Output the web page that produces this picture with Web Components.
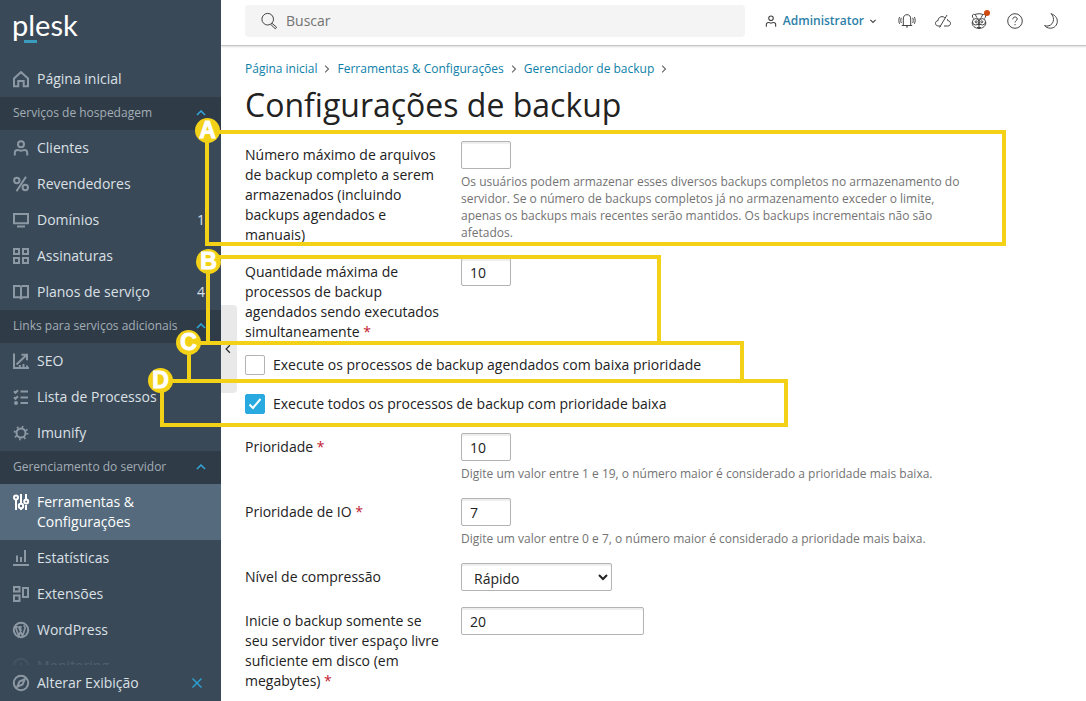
<!DOCTYPE html>
<html lang="pt-BR">
<head>
<meta charset="utf-8">
<meta name="viewport" content="width=device-width, initial-scale=1">
<title>Configurações de backup</title>
<style>
  body { margin: 0; font: 14px/20px "Open Sans", "Noto Sans", sans-serif; color: #222; background: #fff; }
</style>
</head>
<body>
<backup-page></backup-page>

<script>
const ICONS = {
  home: '<path d="M1 15.2V7.5L8 1l7 6.5v7.7h-4.300V10H5.300v5.200z"/>',
  user: '<circle cx="8" cy="4.300" r="3"/><path d="M1.800 15.500v-2.700c0-2 1-2.800 2.700-2.800 1.500 0 2 .8 3.500.8s2-.8 3.500-.8c1.700 0 2.700.8 2.700 2.800v2.700"/>',
  percent: '<circle cx="3.800" cy="4.500" r="2.700"/><circle cx="12.300" cy="11.500" r="2.700"/><path d="M13 .8L3.500 15.300"/>',
  monitor: '<path d="M1 2h14v9.300H1zM4 14.400h8"/>',
  grid: '<path d="M1 1h5v5H1zM10 1h5v5h-5zM1 10h5v5H1zM10 10h5v5h-5z"/>',
  book: '<path d="M8 2.500v12.500M1 2h5.500L8 3l1.500-1H15v11.300H9.500L8 14.500l-1.500-1.200H1z"/>',
  seo: '<path d="M1 .5V15h15M3.500 11.500L13 2.500M8.500 1.700H14v5.500M6.800 15v-3M10.500 15v-4M14 15v-2.500"/>',
  list: '<path d="M1 2.300l1.500 1.500L5 1.200M1 8.300l1.500 1.500L5 7.200M7.500 2.500H15M7.500 8.500H15M7.500 14H15"/><circle cx="3" cy="14" r="1"/>',
  gear: '<circle cx="8" cy="8" r="4.500"/><circle cx="8" cy="8" r="6.300" stroke-width="2.200" stroke-dasharray="1.600 3.350"/>',
  sliders: '<g stroke-width="2"><path d="M3 6v10M8 0v9.500M8 14.500V16M13 0v6.500M13 11v5"/><circle cx="3" cy="3.500" r="2"/><circle cx="8" cy="12" r="2.200"/><circle cx="13.200" cy="7.500" r="2"/></g>',
  chart: '<path d="M0 15h16M4 12V5.500M8 12V7M12 12V0"/>',
  blocks: '<path d="M1 1h5.500v4.500H1zM1 9.500h5.500V15H1zM10 2h5v9h-5z"/>',
  wordpress: '<circle cx="8" cy="8" r="7.200"/><path d="M2.500 5l3.300 9L8 8 6.800 5M5.700 5l3.800 9 2.500-7.500c.4-1.500-1-2-1-3.200M1.800 4.800H5M5.500 4.800h3.200" stroke-width="1.700"/>',
  gauge: '<circle cx="8" cy="8" r="7.200"/><path d="M5 11V8M8 11V5M11 11V7"/>',
  compass: '<circle cx="8" cy="8" r="7.200"/><path d="M11.800 4.200L9.500 9.500 4.200 11.800 6.500 6.500z"/>',
  close: '<path d="M3.500 3.500l9 9M12.500 3.500l-9 9"/>',
  up: '<path d="M4 10l4-4 4 4"/>',
  down: '<path d="M4.500 6.500l3.500 3.500 3.500-3.500"/>',
  right: '<path d="M5.500 3.500L10 8l-4.500 4.500"/>',
  left: '<path d="M10.500 3L5.500 8l5 5"/>',
  search: '<circle cx="6.700" cy="6.200" r="5.800"/><path d="M10.800 10.200l4.800 4-1.300 1.600-4.700-4.500"/>',
  bell: '<path d="M2.800 12.500h10.400M4.300 12.300V6c0-2.800 1.300-4.300 3.700-4.300s3.700 1.500 3.700 4.300v6.300M7 13.900h2M2.300 4.800c-.7 1.500-.7 3.700 0 5.200M13.700 4.800c.7 1.500.7 3.700 0 5.200M.6 4c-1 2-1 4.800 0 6.800M15.400 4c1 2 1 4.800 0 6.800"/>',
  cloud: '<path d="M6 13H3.500C1.500 13 .5 11.800.5 10.300s1-2.500 2.500-2.600C3.200 5 5 3.600 7 3.600c1.200 0 2 .4 2.800 1.200M9 13h3.700c1.800 0 2.800-1.200 2.800-2.700 0-1.500-1-2.500-2.700-2.600-.1-.7-.3-1.200-.6-1.700M12 2L4.500 14.500"/>',
  panda: '<path d="M4 1.500c2.500-1 5.500-1 8 0M2.500 5.500C1 4 1 1.800 2.300 1.300 3.500 1 5 2.300 5.500 4M13.500 5.500C15 4 15 1.800 13.700 1.300 12.500 1 11 2.300 10.500 4M5.500 4.500L8 6.500l2.500-2M1.500 8.500c-.8 2 0 4 1.500 5.200 3 2.400 7 2.400 10 0 1.500-1.200 2.300-3.200 1.500-5.200M7 11.500h2l-1 1zM8 12.500v2M6 14.500h4"/><circle cx="4.700" cy="8.800" r="3.200"/><circle cx="11.300" cy="8.800" r="3.200"/><circle cx="5.200" cy="8.800" r="1"/><circle cx="10.800" cy="8.800" r="1"/>',
  help: '<circle cx="8" cy="8" r="7.300"/><path d="M5.800 6.300c0-1.500 1-2.300 2.200-2.300s2.200.8 2.200 2c0 1.700-2.200 1.700-2.200 3.500M8 11v1.300"/>',
  moon: '<path d="M8 .7c4 1.300 6.300 4 6.300 7.500 0 4-3 7-6.800 7-2.700 0-4.700-1-6-2.700 1 .5 2.300.7 3.500.5 3.500-.6 5.500-3.500 5.500-6.500 0-2.300-1-4.500-2.500-5.800z"/>'
};

/* Base class: clones a template's markup into an open shadow root. */
class Base extends HTMLElement {
  connectedCallback() {
    if (this.shadowRoot) return;
    const t = document.createElement('template');
    t.innerHTML = this.render();
    this.attachShadow({ mode: 'open' }).append(t.content.cloneNode(true));
  }
  attr(name, fallback = '') { return this.getAttribute(name) ?? fallback; }
}

customElements.define('ui-icon', class extends Base {
  render() {
    return `<style>
      :host { display: block; flex: none; width: 16px; height: 16px; }
      svg { display: block; width: 100%; height: 100%; overflow: visible; fill: none; stroke: currentColor; stroke-width: var(--stroke, 1); }
    </style><svg viewBox="0 0 16 16" aria-hidden="true">${ICONS[this.attr('name')]}</svg>`;
  }
});

customElements.define('nav-item', class extends Base {
  render() {
    const count = this.attr('count');
    return `<style>
      :host { display: block; flex: none; --stroke: 2; }
      a { display: flex; gap: 8px; padding: 8px 16px 8px 13px; color: #dbe0e5; text-decoration: none; }
      ui-icon { margin-top: 2px; color: #8c98a3; }
      .text { flex: 1; }
      :host([active]) { background: #556b7d; }
      :host([active]) a, :host([active]) ui-icon { color: #fff; }
    </style>
    <a href="#"><ui-icon name="${this.attr('icon')}"></ui-icon><span class="text"><slot></slot></span>${count && `<span>${count}</span>`}</a>`;
  }
});

customElements.define('nav-group', class extends Base {
  render() {
    return `<style>
      :host { display: block; flex: none; }
      button { display: flex; align-items: center; justify-content: space-between; width: 100%; height: 33px; border: 0; padding: 0 12px 2px 13px;
        background: #2f3c48; color: #a4adb5; font: 12px/17px "Open Sans", "Noto Sans", sans-serif; text-align: left; }
      ui-icon { color: #33a8dc; --stroke: 1.500; }
    </style>
    <button type="button" aria-expanded="true"><span>${this.attr('label')}</span><ui-icon name="up"></ui-icon></button>
    <slot></slot>`;
  }
});

customElements.define('side-bar', class extends Base {
  render() {
    return `<style>
      :host { display: flex; flex-direction: column; height: 100vh; position: sticky; top: 0; background: #3a4958; color: #dbe0e5; }
      .logo { flex: none; box-sizing: border-box; height: 61px; padding: 8px 12px; color: #fff; font: 29px/34px Lato, sans-serif; text-decoration: none; position: relative; }
      .logo::after { content: ""; position: absolute; left: 24px; top: 40px; width: 13px; height: 3px; background: #3a9dbd; }
      nav { flex: 1; min-height: 0; overflow: hidden; display: flex; flex-direction: column; position: relative; }
      nav::after { content: ""; position: absolute; inset: auto 0 0 0; height: 20px; background: linear-gradient(transparent, #3a4958dd 60%); }
      .foot { flex: none; display: flex; align-items: center; height: 36px; }
      .foot nav-item { flex: 1; }
      .foot button { border: 0; padding: 0 16px 0 0; background: none; color: #2a9fd0; --stroke: 1.500; }
    </style>
    <a class="logo" href="#">plesk</a>
    <nav>
      <nav-item icon="home">Página inicial</nav-item>
      <nav-group label="Serviços de hospedagem">
        <nav-item icon="user">Clientes</nav-item>
        <nav-item icon="percent">Revendedores</nav-item>
        <nav-item icon="monitor" count="1">Domínios</nav-item>
        <nav-item icon="grid">Assinaturas</nav-item>
        <nav-item icon="book" count="4">Planos de serviço</nav-item>
      </nav-group>
      <nav-group label="Links para serviços adicionais">
        <nav-item icon="seo">SEO</nav-item>
        <nav-item icon="list">Lista de Processos</nav-item>
        <nav-item icon="gear">Imunify</nav-item>
      </nav-group>
      <nav-group label="Gerenciamento do servidor">
        <nav-item icon="sliders" active>Ferramentas &amp; Configurações</nav-item>
        <nav-item icon="chart">Estatísticas</nav-item>
        <nav-item icon="blocks">Extensões</nav-item>
        <nav-item icon="wordpress">WordPress</nav-item>
        <nav-item icon="gauge">Monitoring</nav-item>
      </nav-group>
    </nav>
    <div class="foot">
      <nav-item icon="compass">Alterar Exibição</nav-item>
      <button type="button" aria-label="Fechar"><ui-icon name="close"></ui-icon></button>
    </div>`;
  }
});

customElements.define('top-bar', class extends Base {
  render() {
    return `<style>
      :host { display: flex; align-items: center; justify-content: space-between; gap: 16px; box-sizing: border-box; height: 46px; padding: 0 27px 4px 24px;
        border-bottom: 1px solid #c4c4c4; box-shadow: 0 1px 2px #ddd; color: #444; }
      label { flex: 0 1 500px; display: flex; align-items: center; gap: 9px; box-sizing: border-box; height: 32px; padding: 0 16px; background: #f4f4f4; border-radius: 4px; }
      input { flex: 1; min-width: 0; border: 0; padding: 0; background: none; font: 14px/20px "Open Sans", "Noto Sans", sans-serif; outline: 0; }
      input::placeholder { color: #737373; opacity: 1; }
      .tools { display: flex; align-items: center; gap: 20px; }
      button { display: flex; align-items: center; border: 0; padding: 0; background: none; color: inherit; position: relative; }
      .admin { gap: 6px; color: #2c80a8; font: 600 12px/20px "Open Sans", "Noto Sans", sans-serif; }
      .admin ui-icon { color: #444; width: 12px; height: 12px; --stroke: 1.500; }
      .admin ui-icon + span + ui-icon { margin-left: -3px; }
      .dot::after { content: ""; position: absolute; right: -3px; top: -3px; width: 6px; height: 6px; border-radius: 50%; background: #cf4a0e; }
    </style>
    <label><ui-icon name="search"></ui-icon><input type="search" placeholder="Buscar" aria-label="Buscar"></label>
    <div class="tools">
      <button type="button" class="admin"><ui-icon name="user"></ui-icon><span>Administrator</span><ui-icon name="down"></ui-icon></button>
      <button type="button" aria-label="Notificações"><ui-icon name="bell"></ui-icon></button>
      <button type="button" aria-label="Nuvem"><ui-icon name="cloud"></ui-icon></button>
      <button type="button" aria-label="Novidades" class="dot"><ui-icon name="panda"></ui-icon></button>
      <button type="button" aria-label="Ajuda"><ui-icon name="help"></ui-icon></button>
      <button type="button" aria-label="Modo escuro"><ui-icon name="moon"></ui-icon></button>
    </div>`;
  }
});

customElements.define('bread-crumbs', class extends Base {
  render() {
    return `<style>
      :host { display: block; }
      nav { display: flex; flex-wrap: wrap; align-items: center; font-size: 12px; line-height: 18px; gap: 4px; }
      a { color: #0d7fa8; text-decoration: none; }
      ui-icon { width: 12px; height: 12px; color: #666; --stroke: 1.500; }
    </style>
    <nav>${['Página inicial', 'Ferramentas &amp; Configurações', 'Gerenciador de backup'].map(t => `<a href="#">${t}</a><ui-icon name="right"></ui-icon>`).join('')}</nav>`;
  }
});

customElements.define('form-field', class extends Base {
  render() {
    const hint = this.attr('hint'), options = this.attr('options');
    const width = this.attr('width', '50px');
    const control = options
      ? `<select id="control" style="width:${width}"><option>${options}</option></select>`
      : `<input id="control" type="text" value="${this.attr('value')}" style="width:${width}">`;
    return `<style>
      :host { display: grid; grid-template-columns: 200px minmax(0, 512px); column-gap: 16px; align-items: start; }
      label { padding-top: 4px; margin-bottom: -3px; }
      .required { color: #c3202f; }
      input, select { display: block; box-sizing: border-box; height: 28px; border: 1px solid #b3b3b3; border-radius: 2px; background: #fff;
        box-shadow: inset 0 2px 1px #eee; color: #222; font: 14px/20px "Open Sans", "Noto Sans", sans-serif; padding: 0 8px; }
      select { padding: 2px 0 0 8px; }
      p { margin: 4px 0 0; color: #737373; font-size: 12px; line-height: 17px; }
    </style>
    <label for="control">${this.attr('label')}${this.hasAttribute('required') ? ' <span class="required">*</span>' : ''}</label>
    <div>${control}${hint && `<p>${hint}</p>`}</div>`;
  }
});

customElements.define('check-field', class extends Base {
  render() {
    return `<style>
      :host { display: block; padding-bottom: 3px; }
      label { display: flex; width: fit-content; gap: 8px; }
      input { appearance: none; flex: none; box-sizing: border-box; width: 20px; height: 20px; margin: 0; border: 1px solid #b3b3b3; border-radius: 2px; background: #fff; }
      input:checked { border-color: #28aae1; background: #28aae1; }
      .box { display: grid; }
      .box > * { grid-area: 1 / 1; }
      svg { width: 20px; height: 20px; fill: none; stroke: #fff; stroke-width: 2; pointer-events: none; }
    </style>
    <label><span class="box"><input type="checkbox"${this.hasAttribute('checked') ? ' checked' : ''}><svg viewBox="0 0 20 20" aria-hidden="true"><path d="M4.500 10.500l3.500 3.500L15.500 5"/></svg></span><slot></slot></label>`;
  }
});

/* Lettered frame laid over the page to point out one setting. */
customElements.define('callout-frame', class extends Base {
  render() {
    const [x, y, w, h, dx, dy] = this.attr('box').split(' ');
    return `<style>
      :host { position: absolute; left: ${x}px; top: ${y}px; width: ${w}px; height: ${h}px; box-sizing: border-box; border: 4px solid #f3d117; pointer-events: none; }
      span { position: absolute; left: ${dx}px; top: ${dy}px; width: 25px; height: 25px; border-radius: 50%; background: #f3d117; color: #fff;
        font: bold 23px/25px "Liberation Sans", Arial, sans-serif; text-align: center; -webkit-text-stroke: 1px #fff; }
    </style><span><slot></slot></span>`;
  }
});

customElements.define('backup-page', class extends Base {
  render() {
    return `<style>
      :host { display: grid; grid-template-columns: 221px minmax(0, 1fr); position: relative; height: 100vh; overflow: hidden; }
      main { padding: 14px 24px 0; }
      h1 { margin: 4px 0 13px; font-size: 32px; line-height: 46px; font-weight: 400; }
      form { display: flex; flex-direction: column; gap: 16px; }
      .handle { position: absolute; left: 221px; top: 305px; width: 16px; height: 88px; border: 0; padding: 0 0 0 1px; border-radius: 0 4px 4px 0; background: #e9e9e9; color: #222; }
      .handle ui-icon { width: 12px; height: 12px; --stroke: 1.500; }
    </style>
    <side-bar></side-bar>
    <div>
      <top-bar></top-bar>
      <main>
        <bread-crumbs></bread-crumbs>
        <h1>Configurações de backup</h1>
        <form>
          <form-field label="Número máximo de arquivos de backup completo a serem armazenados (incluindo backups agendados e manuais)" hint="Os usuários podem armazenar esses diversos backups completos no armazenamento do servidor. Se o número de backups completos já no armazenamento exceder o limite, apenas os backups mais recentes serão mantidos. Os backups incrementais não são afetados."></form-field>
          <form-field label="Quantidade máxima de processos de backup agendados sendo executados simultaneamente" required value="10"></form-field>
          <check-field>Execute os processos de backup agendados com baixa prioridade</check-field>
          <check-field checked>Execute todos os processos de backup com prioridade baixa</check-field>
          <form-field label="Prioridade" required value="10" hint="Digite um valor entre 1 e 19, o número maior é considerado a prioridade mais baixa."></form-field>
          <form-field label="Prioridade de IO" required value="7" hint="Digite um valor entre 0 e 7, o número maior é considerado a prioridade mais baixa."></form-field>
          <form-field label="Nível de compressão" options="Rápido" width="151px"></form-field>
          <form-field label="Inicie o backup somente se seu servidor tiver espaço livre suficiente em disco (em megabytes)" required value="20" width="183px"></form-field>
        </form>
      </main>
    </div>
    <button class="handle" type="button" aria-label="Recolher menu"><ui-icon name="left"></ui-icon></button>
    <callout-frame box="205 130 801 116 -14 -16">A</callout-frame>
    <callout-frame box="206 255 455 90 -14 -10">B</callout-frame>
    <callout-frame box="187 341 557 42 -15 -15">C</callout-frame>
    <callout-frame box="160 379 628 48 -16 -15">D</callout-frame>`;
  }
});
</script>
</body>
</html>
